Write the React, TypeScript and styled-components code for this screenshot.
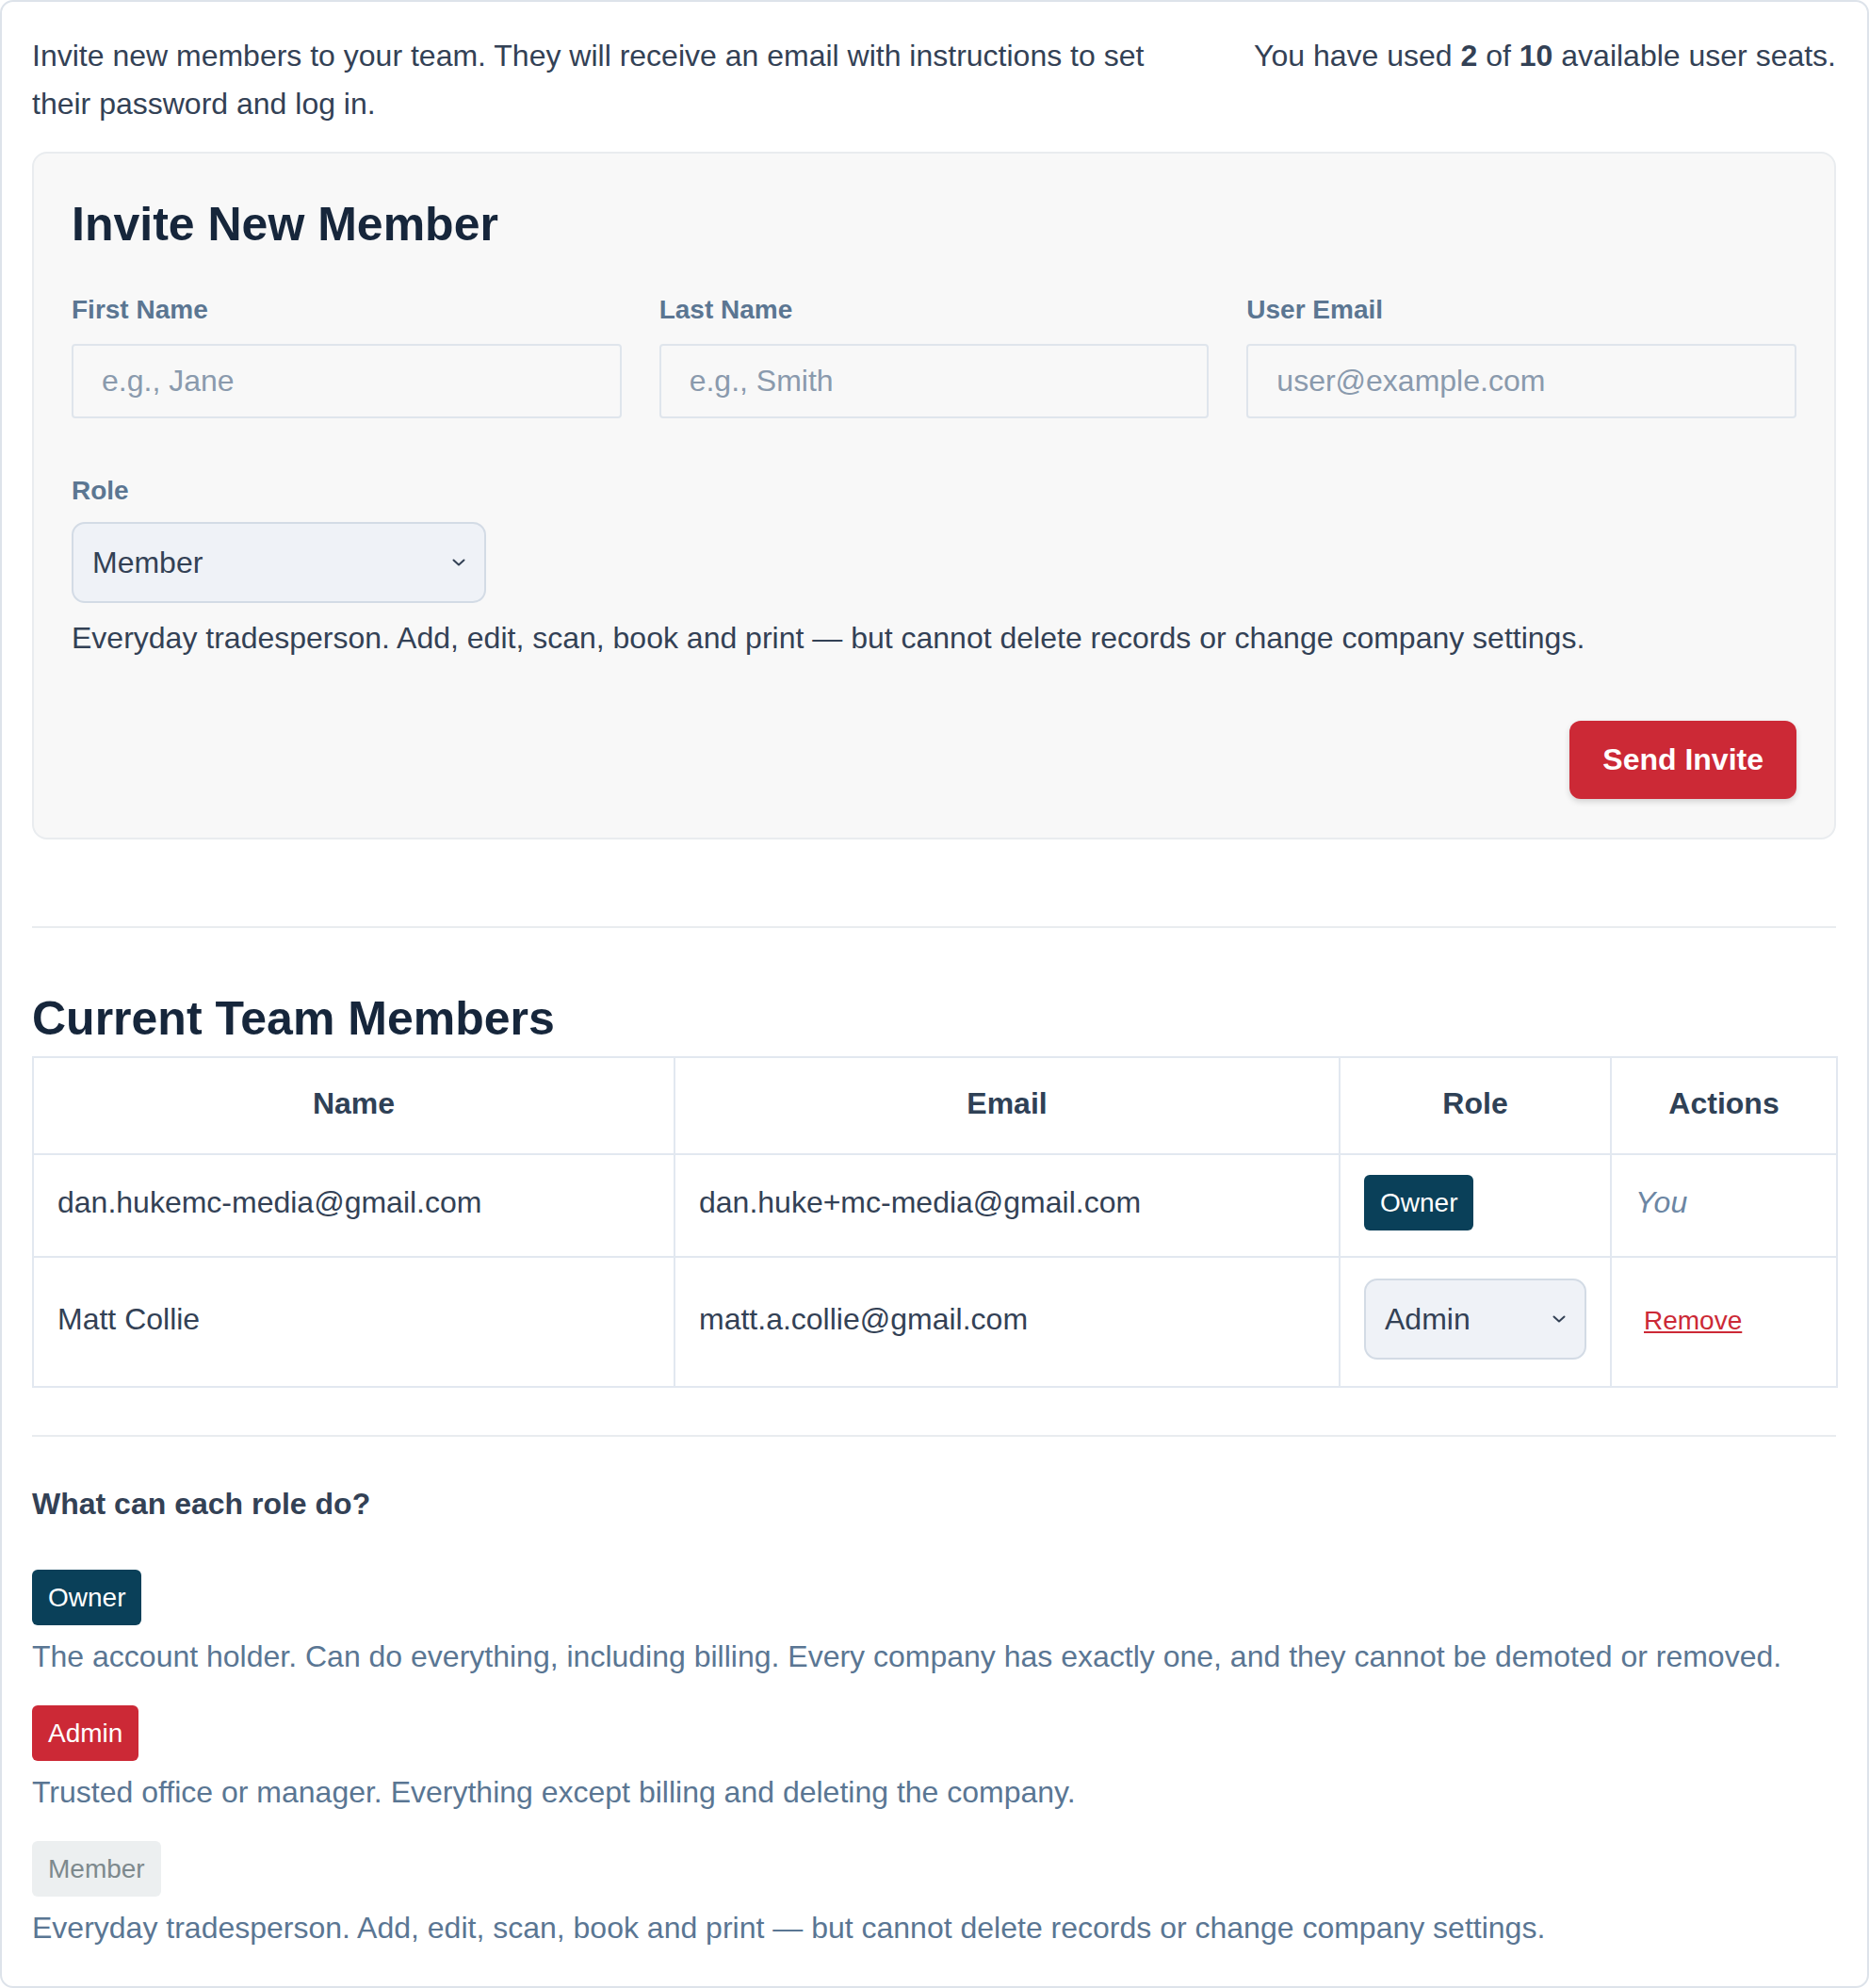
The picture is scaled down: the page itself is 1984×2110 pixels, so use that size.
import React from 'react';
import styled, { createGlobalStyle } from 'styled-components';

const GlobalStyle = createGlobalStyle`
  html, body {
    margin: 0;
    padding: 0;
    background: #ffffff;
  }
  body {
    font-family: 'Liberation Sans', Arial, Helvetica, sans-serif;
    color: #334155;
  }
  * { box-sizing: border-box; }
`;

type Role = 'Owner' | 'Admin' | 'Member';

const roleInfo: { role: Role; text: string }[] = [
  {
    role: 'Owner',
    text: 'The account holder. Can do everything, including billing. Every company has exactly one, and they cannot be demoted or removed.',
  },
  { role: 'Admin', text: 'Trusted office or manager. Everything except billing and deleting the company.' },
  {
    role: 'Member',
    text: 'Everyday tradesperson. Add, edit, scan, book and print — but cannot delete records or change company settings.',
  },
];

function Chevron() {
  return (
    <ChevronIcon viewBox="0 0 16 16" width="16" height="16">
      <path d="M2.5 5.5 L8 10.5 L13.5 5.5" fill="none" stroke="#334155" strokeWidth="2" strokeLinecap="round" strokeLinejoin="round" />
    </ChevronIcon>
  );
}

function App() {
  return (
    <>
      <GlobalStyle />
      <Page>
        <Intro>
          <IntroText>
            Invite new members to your team. They will receive an email with instructions to set their password and log in.
          </IntroText>
          <Seats>
            You have used <strong>2</strong> of <strong>10</strong> available user seats.
          </Seats>
        </Intro>

        <InviteCard>
          <Heading>Invite New Member</Heading>
          <FieldGrid>
            <Field>
              <Label>First Name</Label>
              <TextInput placeholder="e.g., Jane" />
            </Field>
            <Field>
              <Label>Last Name</Label>
              <TextInput placeholder="e.g., Smith" />
            </Field>
            <Field>
              <Label>User Email</Label>
              <TextInput placeholder="user@example.com" />
            </Field>
          </FieldGrid>
          <RoleField>
            <Label>Role</Label>
            <SelectBox $width={440}>
              <span>Member</span>
              <Chevron />
            </SelectBox>
            <RoleHint>
              Everyday tradesperson. Add, edit, scan, book and print — but cannot delete records or change company settings.
            </RoleHint>
          </RoleField>
          <Actions>
            <SendButton>Send Invite</SendButton>
          </Actions>
        </InviteCard>

        <Divider $top={92} />

        <SectionTitle>Current Team Members</SectionTitle>
        <Table>
          <colgroup>
            <col style={{ width: 681 }} />
            <col style={{ width: 706 }} />
            <col style={{ width: 288 }} />
            <col style={{ width: 240 }} />
          </colgroup>
          <thead>
            <tr>
              <Th>Name</Th>
              <Th>Email</Th>
              <Th>Role</Th>
              <Th>Actions</Th>
            </tr>
          </thead>
          <tbody>
            <tr>
              <Td $height={109}>dan.hukemc-media@gmail.com</Td>
              <Td $height={109}>dan.huke+mc-media@gmail.com</Td>
              <Td $height={109}>
                <Badge $role="Owner">Owner</Badge>
              </Td>
              <Td $height={109}>
                <You>You</You>
              </Td>
            </tr>
            <tr>
              <Td $height={138}>Matt Collie</Td>
              <Td $height={138}>matt.a.collie@gmail.com</Td>
              <Td $height={138}>
                <SelectBox $width={236}>
                  <span>Admin</span>
                  <Chevron />
                </SelectBox>
              </Td>
              <Td $height={138}>
                <RemoveLink>Remove</RemoveLink>
              </Td>
            </tr>
          </tbody>
        </Table>

        <Divider $top={50} />

        <RolesTitle>What can each role do?</RolesTitle>
        <RoleList>
          {roleInfo.map((r) => (
            <RoleItem key={r.role}>
              <div>
                <Badge $role={r.role}>{r.role}</Badge>
              </div>
              <RoleDesc>{r.text}</RoleDesc>
            </RoleItem>
          ))}
        </RoleList>
      </Page>
    </>
  );
}

const Page = styled.div`
  width: 1984px;
  min-height: 2110px;
  border: 2px solid #dde3ea;
  border-radius: 14px;
  padding: 32px 33px 37px 32px;
  background: #fff;
`;

const Intro = styled.div`
  display: flex;
  justify-content: space-between;
  align-items: flex-start;
  gap: 80px;
  font-size: 32px;
  line-height: 51px;
  color: #334155;
`;

const IntroText = styled.p`
  flex: 1;
  margin: 0;
`;

const Seats = styled.p`
  margin: 0;
  white-space: nowrap;
  strong { font-weight: 700; }
`;

const InviteCard = styled.section`
  margin-top: 25px;
  background: #f8f8f8;
  border: 2px solid #e9ecef;
  border-radius: 16px;
  padding: 45px 40px 41px 40px;
`;

const Heading = styled.h2`
  margin: 0;
  font-size: 50px;
  line-height: 60px;
  font-weight: 700;
  color: #16263b;
`;

const FieldGrid = styled.div`
  display: grid;
  grid-template-columns: repeat(3, 1fr);
  gap: 40px;
  margin-top: 40px;
`;

const Field = styled.div`
  display: flex;
  flex-direction: column;
  gap: 15px;
`;

const Label = styled.label`
  font-size: 28px;
  line-height: 42px;
  font-weight: 700;
  color: #5b7692;
`;

const TextInput = styled.input`
  height: 79px;
  width: 100%;
  border: 2px solid #dfe5ec;
  border-radius: 4px;
  background: #f8f8f8;
  padding: 0 30px;
  font-family: inherit;
  font-size: 32px;
  color: #334155;
  outline: none;
  &::placeholder { color: #8a9aad; }
`;

const RoleField = styled.div`
  display: flex;
  flex-direction: column;
  align-items: flex-start;
  margin-top: 56px;
  gap: 12px;
`;

const SelectBox = styled.div<{ $width: number }>`
  width: ${(p) => p.$width}px;
  height: 86px;
  display: flex;
  align-items: center;
  justify-content: space-between;
  padding: 0 19px 0 20px;
  background: #eff2f7;
  border: 2px solid #d3dbe5;
  border-radius: 14px;
  font-size: 32px;
  color: #334155;
`;

const ChevronIcon = styled.svg`
  flex-shrink: 0;
`;

const RoleHint = styled.p`
  margin: 1px 0 0;
  font-size: 32px;
  line-height: 48px;
  color: #334155;
`;

const Actions = styled.div`
  display: flex;
  justify-content: flex-end;
  margin-top: 64px;
`;

const SendButton = styled.button`
  height: 83px;
  padding: 0 35px;
  border: none;
  border-radius: 12px;
  background: #cc2936;
  color: #fff;
  font-family: inherit;
  font-size: 32px;
  font-weight: 700;
  box-shadow: 0 3px 6px rgba(0, 0, 0, 0.15);
  cursor: pointer;
`;

const Divider = styled.hr<{ $top: number }>`
  margin: ${(p) => p.$top}px 0 0;
  border: none;
  border-top: 2px solid #e9ecef;
`;

const SectionTitle = styled.h2`
  margin: 66px 0 0;
  font-size: 50px;
  line-height: 60px;
  font-weight: 700;
  color: #16263b;
`;

const Table = styled.table`
  margin-top: 10px;
  width: 100%;
  border-collapse: collapse;
  table-layout: fixed;
  font-size: 32px;
  color: #334155;
`;

const Th = styled.th`
  height: 103px;
  border: 2px solid #e2e8f0;
  padding: 0 0 5px;
  font-weight: 700;
  text-align: center;
  color: #2f4156;
`;

const Td = styled.td<{ $height: number }>`
  height: ${(p) => p.$height}px;
  border: 2px solid #e2e8f0;
  padding: 0 25px 6px;
  vertical-align: middle;
`;

const badgeColors: Record<Role, { bg: string; fg: string }> = {
  Owner: { bg: '#0a4059', fg: '#ffffff' },
  Admin: { bg: '#cc2936', fg: '#ffffff' },
  Member: { bg: '#eceff0', fg: '#7d898d' },
};

const Badge = styled.span<{ $role: Role }>`
  display: inline-block;
  padding: 0 17px;
  height: 59px;
  line-height: 59px;
  border-radius: 6px;
  font-size: 28px;
  background: ${(p) => badgeColors[p.$role].bg};
  color: ${(p) => badgeColors[p.$role].fg};
`;

const You = styled.span`
  font-style: italic;
  color: #6c86a3;
`;

const RemoveLink = styled.a`
  display: inline-block;
  padding-left: 9px;
  font-size: 28px;
  color: #cc2936;
  text-decoration: underline;
  cursor: pointer;
`;

const RolesTitle = styled.h3`
  margin: 47px 0 0;
  font-size: 32px;
  line-height: 48px;
  font-weight: 700;
  color: #334155;
`;

const RoleList = styled.div`
  margin-top: 46px;
  display: flex;
  flex-direction: column;
  gap: 28px;
`;

const RoleItem = styled.div`
  display: flex;
  flex-direction: column;
  gap: 9px;
`;

const RoleDesc = styled.p`
  margin: 0;
  font-size: 32px;
  line-height: 48px;
  color: #5a7693;
`;

export default App;
